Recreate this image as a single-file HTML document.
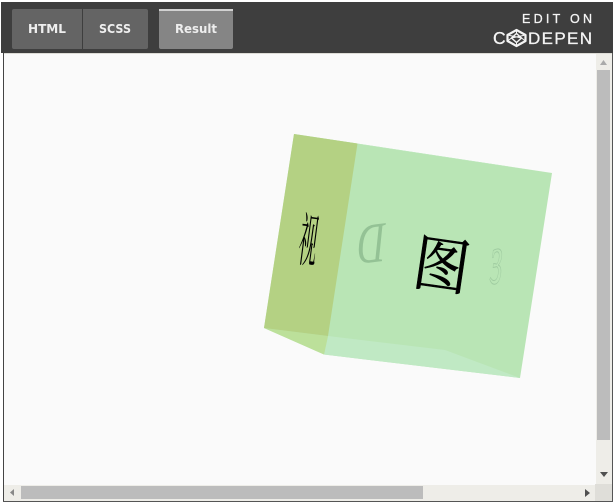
<!DOCTYPE html>
<html>
<head>
<meta charset="utf-8">
<style>
html,body{margin:0;padding:0;background:#fff;width:615px;height:504px;overflow:hidden}
svg{display:block;position:absolute;left:0;top:0}
</style>
</head>
<body>
<svg width="615" height="504" viewBox="0 0 615 504" xmlns="http://www.w3.org/2000/svg">
  <!-- frame -->
  <rect x="0" y="0" width="615" height="504" fill="#ffffff"/>
  <rect x="3" y="53" width="609" height="449" fill="#fafafa"/>
  <rect x="3" y="53" width="1" height="449" fill="#444"/>
  <rect x="612" y="53" width="1" height="449" fill="#555"/>
  <rect x="3" y="501" width="610" height="1" fill="#555"/>

  <!-- header -->
  <rect x="1" y="2" width="612" height="51" fill="#3e3e3e"/>
  <rect x="4" y="53" width="608" height="1" fill="#dddcd6"/>
  <rect x="12" y="9" width="136" height="40" rx="2" fill="#646464"/>
  <rect x="82" y="9" width="1" height="40" fill="#3e3e3e"/>
  <rect x="159" y="9" width="74" height="40" rx="2" fill="#858585"/>
  <rect x="159" y="9" width="74" height="2" fill="#d2d2d2"/>
  <g font-family="'DejaVu Sans','Liberation Sans',sans-serif" font-size="12" font-weight="bold" fill="#eeeeee">
    <text x="28" y="33" textLength="38" lengthAdjust="spacingAndGlyphs">HTML</text>
    <text x="99" y="33" textLength="32" lengthAdjust="spacingAndGlyphs">SCSS</text>
    <text x="175" y="33" textLength="42" lengthAdjust="spacingAndGlyphs">Result</text>
  </g>
  <g font-family="'Liberation Sans',sans-serif" fill="#f4f4f4" stroke="#f4f4f4" stroke-width="0.3">
    <text x="522" y="23" font-size="12.500" textLength="70">EDIT ON</text>
    <text x="493" y="44" font-size="17.500" textLength="13">C</text>
    <text x="528" y="44" font-size="17" textLength="64">DEPEN</text>
  </g>
  <g fill="none" stroke="#f4f4f4" stroke-linejoin="round">
    <path d="M516.500 30 L525.500 35 V41 L516.500 46 L507.500 41 V35 Z" stroke-width="2.200"/>
    <path d="M516.500 33.500 L521.500 38 L516.500 42.500 L511.500 38 Z" stroke-width="1.500"/>
    <path d="M516.500 30 V33.500 M516.500 42.500 V46 M507.500 35 L521.500 38 M525.500 35 L511.500 38 M507.500 41 L511.500 38 M525.500 41 L521.500 38" stroke-width="1"/>
  </g>

  <!-- cube -->
  <polygon points="294,134 552,173 520,378 324,354.500 264,328" fill="#b9e5b5"/>
  <polygon points="294,134 552,173 470,161 358,144" fill="#c0e9c2"/>
  <polygon points="328,336 445,350 520,378 324,354.500" fill="#c0e9c4"/>
  <polygon points="264,328 328,336 324,354.500" fill="#bce09a"/>
  <polygon points="294,134 357.500,143.500 328,336 264,328" fill="#b4d183"/>

  <!-- letters -->
  <text transform="matrix(-0.76 0.09 -0.12 1.16 383 261)" font-family="'Liberation Serif',serif" font-size="50" fill="#94c295">D</text>
  <text transform="matrix(-0.42 0.04 -0.16 1 500 283)" font-family="'Liberation Serif',serif" font-style="italic" font-size="74" fill="none" stroke="#9fcba0" stroke-width="1">ε</text>
  <text transform="matrix(1.06 0.15 -0.17 1.16 411 283)" font-family="'Noto Serif CJK SC','Noto Sans CJK SC',serif" font-weight="400" font-size="52" fill="#000" stroke="#000" stroke-width="0.500">图</text>
  <text transform="matrix(0.36 0.05 -0.15 1.16 297 260)" font-family="'Noto Serif CJK SC','Noto Sans CJK SC',serif" font-size="50" fill="#000">视</text>

  <!-- vertical scrollbar -->
  <rect x="596" y="54" width="16" height="431" fill="#eeede8"/>
  <rect x="597" y="70" width="13" height="370" fill="#bcbcbc"/>
  <polygon points="600,65 607,65 603.500,60" fill="#aaa"/>
  <polygon points="600,472 608,472 604,477" fill="#505050"/>

  <!-- horizontal scrollbar -->
  <rect x="4" y="485" width="608" height="16" fill="#eeede8"/>
  <rect x="21" y="486" width="402" height="13" fill="#bcbcbc"/>
  <polygon points="14,489 14,496 10,492.500" fill="#888"/>
  <polygon points="585,489 585,497 590,493" fill="#505050"/>
  <rect x="595" y="484" width="17" height="17" fill="#dfded9"/>
</svg>
</body>
</html>
